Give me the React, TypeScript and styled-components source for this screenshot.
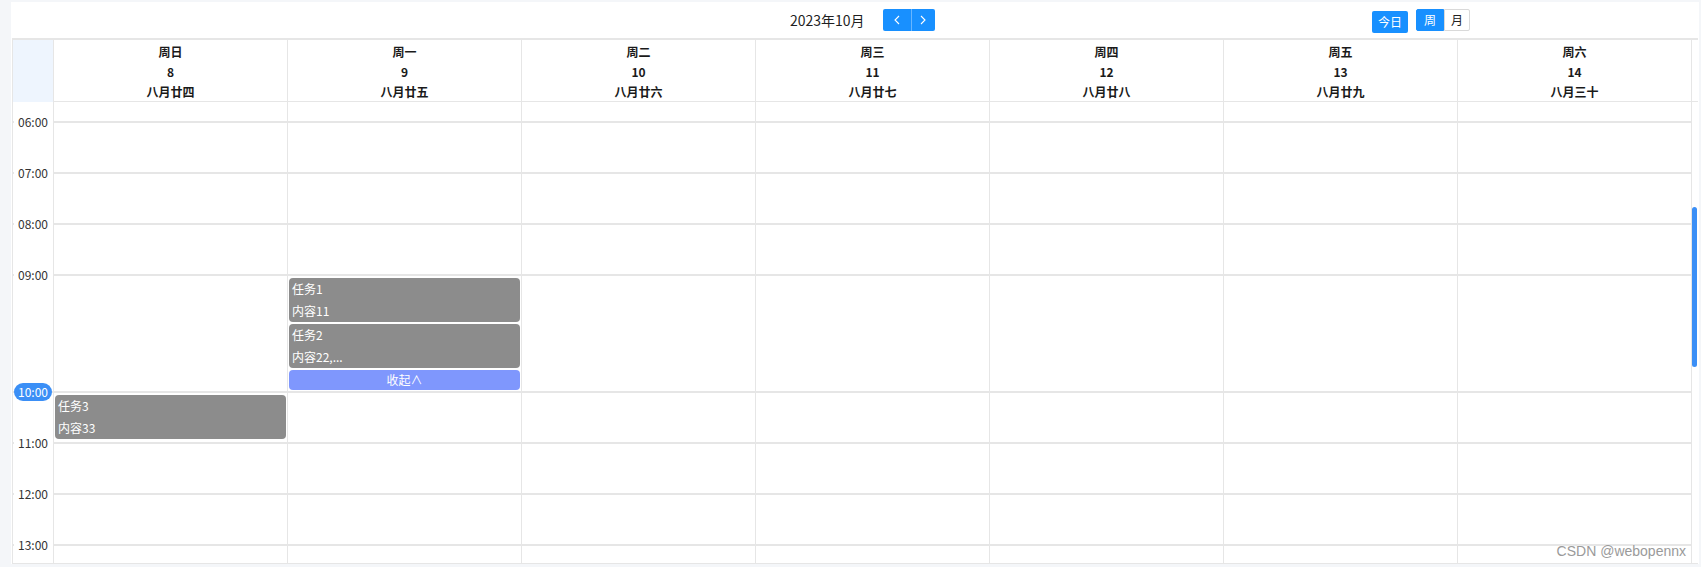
import React from 'react'
import styled, { createGlobalStyle } from 'styled-components'

const GlobalStyle = createGlobalStyle`
  html, body {
    margin: 0;
    padding: 0;
    background: #f4f6f9;
    font-family: "Microsoft YaHei", "Noto Sans CJK SC", "Noto Sans", sans-serif;
  }
  * { box-sizing: border-box; }
`

const BLUE = '#1890ff'
const LINE = '#e6e6e6'

const Page = styled.div`
  position: relative;
  height: 567px;
  padding: 2px 2px 0 11px;
`

const Panel = styled.div`
  width: 1688px;
  height: 562px;
  background: #fff;
  display: flex;
  flex-direction: column;
`

const Toolbar = styled.div`
  height: 36px;
  display: flex;
  align-items: center;
  padding: 0 229px 0 779px;
`

const Title = styled.div`
  font-size: 14px;
  color: #1f1f1f;
  line-height: 20px;
`

const NavGroup = styled.div`
  margin-left: 18px;
  display: flex;
  height: 22px;
  border-radius: 2px;
  overflow: hidden;
`

const NavBtn = styled.button<{ $w: number; $split?: boolean }>`
  width: ${(p) => p.$w}px;
  height: 22px;
  padding: 0;
  border: none;
  border-left: ${(p) => (p.$split ? '1px solid rgba(255,255,255,0.35)' : 'none')};
  background: ${BLUE};
  display: flex;
  align-items: center;
  justify-content: center;
`

const RightGroup = styled.div`
  margin-left: auto;
  display: flex;
  align-items: center;
`

const TodayBtn = styled.button`
  width: 36px;
  height: 22px;
  margin-top: 4px;
  padding: 0;
  border: none;
  border-radius: 2px;
  background: ${BLUE};
  color: #fff;
  font-family: inherit;
  font-size: 12px;
  line-height: 22px;
`

const Segmented = styled.div`
  margin-left: 8px;
  display: flex;
  height: 22px;
`

const SegBtn = styled.button<{ $active?: boolean; $w: number }>`
  width: ${(p) => p.$w}px;
  height: 22px;
  padding: 0;
  font-family: inherit;
  font-size: 12px;
  line-height: 20px;
  color: ${(p) => (p.$active ? '#fff' : '#222')};
  background: ${(p) => (p.$active ? BLUE : '#fff')};
  border: 1px solid ${(p) => (p.$active ? BLUE : '#d9d9d9')};
  border-radius: ${(p) => (p.$active ? '2px 0 0 2px' : '0 2px 2px 0')};
`

const Grid = styled.div`
  margin-left: 1px;
  width: 1686px;
  height: 526px;
  border-top: 2px solid ${LINE};
  border-left: 1px solid ${LINE};
  border-bottom: 1px solid ${LINE};
  display: flex;
  flex-direction: column;
`

const HeaderRow = styled.div`
  display: grid;
  grid-template-columns: 40px repeat(7, 234px) 7px;
  height: 62px;
  border-bottom: 1px solid ${LINE};
`

const CornerCell = styled.div`
  background: #eef5fe;
`

const DayHead = styled.div`
  border-left: 1px solid ${LINE};
  padding-top: 2px;
  text-align: center;
  font-size: 12px;
  font-weight: bold;
  line-height: 20px;
  color: #1a1a1a;
`

const Gutter = styled.div`
  border-left: 1px solid ${LINE};
`

const Body = styled.div`
  flex: 1;
  display: flex;
  overflow: hidden;
`

const Rows = styled.div`
  width: 1678px;
  display: flex;
  flex-direction: column;
`

const HourRow = styled.div<{ $h: number; $noLine?: boolean }>`
  height: ${(p) => p.$h}px;
  flex: none;
  display: grid;
  grid-template-columns: 40px repeat(7, 234px);
  border-top: ${(p) => (p.$noLine ? 'none' : `2px solid ${LINE}`)};
`

const TimeCell = styled.div`
  display: flex;
  justify-content: flex-end;
  align-items: flex-start;
`

const TimeLabel = styled.span`
  margin-top: -9px;
  padding: 0 5px 0 4px;
  background: #fff;
  font-size: 12px;
  line-height: 16px;
  color: #333;
`

const NowBadge = styled.span`
  margin-top: -10px;
  margin-right: 1px;
  width: 38px;
  height: 18px;
  border-radius: 9px;
  background: #3b8ff6;
  color: #fff;
  font-size: 12px;
  line-height: 18px;
  text-align: center;
`

const DayCell = styled.div`
  border-left: 1px solid ${LINE};
  padding: 2px 1px 0 1px;
  display: flex;
  flex-direction: column;
  gap: 2px;
  min-width: 0;
`

const EventCard = styled.div`
  height: 44px;
  flex: none;
  background: #8c8c8c;
  border-radius: 4px;
  padding: 0 3px;
  color: #fff;
  font-size: 12px;
  line-height: 22px;
  white-space: nowrap;
  overflow: hidden;
`

const CollapseBtn = styled.div`
  height: 20px;
  flex: none;
  background: #7f97fd;
  border-radius: 4px;
  color: #fff;
  font-size: 12px;
  line-height: 20px;
  text-align: center;
`

const ScrollTrack = styled.div`
  width: 7px;
  border-left: 1px solid ${LINE};
`

const Thumb = styled.div`
  margin-top: 105px;
  width: 5px;
  height: 160px;
  border-radius: 3px;
  background: #3b8ff6;
`

const Watermark = styled.div`
  position: absolute;
  right: 15px;
  bottom: 8px;
  font-family: "Liberation Sans", Arial, sans-serif;
  font-size: 14px;
  color: #9a9a9a;
  text-shadow: 0 0 2px #fff;
`

const Chevron = ({ dir }: { dir: 'left' | 'right' }) => (
  <svg width="6" height="10" viewBox="0 0 6 10">
    <polyline
      points={dir === 'left' ? '5,1 1,5 5,9' : '1,1 5,5 1,9'}
      fill="none"
      stroke="#fff"
      strokeWidth="1.1"
    />
  </svg>
)

const days = [
  { w: '周日', d: 8, l: '八月廿四' },
  { w: '周一', d: 9, l: '八月廿五' },
  { w: '周二', d: 10, l: '八月廿六' },
  { w: '周三', d: 11, l: '八月廿七' },
  { w: '周四', d: 12, l: '八月廿八' },
  { w: '周五', d: 13, l: '八月廿九' },
  { w: '周六', d: 14, l: '八月三十' },
]

type Ev = { title: string; body: string }

const hours: { label: string; h: number; now?: boolean; events?: Record<number, Ev[]>; collapse?: number }[] = [
  { label: '06:00', h: 51 },
  { label: '07:00', h: 51 },
  { label: '08:00', h: 51 },
  {
    label: '09:00',
    h: 117,
    events: {
      1: [
        { title: '任务1', body: '内容11' },
        { title: '任务2', body: '内容22,...' },
      ],
    },
    collapse: 1,
  },
  { label: '10:00', h: 51, now: true, events: { 0: [{ title: '任务3', body: '内容33' }] } },
  { label: '11:00', h: 51 },
  { label: '12:00', h: 51 },
  { label: '13:00', h: 19 },
]

export default function App() {
  return (
    <Page>
      <GlobalStyle />
      <Panel>
        <Toolbar>
          <Title>2023年10月</Title>
          <NavGroup>
            <NavBtn $w={28}>
              <Chevron dir="left" />
            </NavBtn>
            <NavBtn $w={24} $split>
              <Chevron dir="right" />
            </NavBtn>
          </NavGroup>
          <RightGroup>
            <TodayBtn>今日</TodayBtn>
            <Segmented>
              <SegBtn $active $w={28}>周</SegBtn>
              <SegBtn $w={26}>月</SegBtn>
            </Segmented>
          </RightGroup>
        </Toolbar>

        <Grid>
          <HeaderRow>
            <CornerCell />
            {days.map((d) => (
              <DayHead key={d.w}>
                <div>{d.w}</div>
                <div>{d.d}</div>
                <div>{d.l}</div>
              </DayHead>
            ))}
            <Gutter />
          </HeaderRow>

          <Body>
            <Rows>
              {/* tail of the 05:00 hour, scrolled out of view */}
              <HourRow $h={19} $noLine>
                <TimeCell />
                {days.map((d) => (
                  <DayCell key={d.w} />
                ))}
              </HourRow>
              {hours.map((hr) => (
                <HourRow key={hr.label} $h={hr.h}>
                  <TimeCell>
                    {hr.now ? <NowBadge>{hr.label}</NowBadge> : <TimeLabel>{hr.label}</TimeLabel>}
                  </TimeCell>
                  {days.map((d, i) => (
                    <DayCell key={d.w}>
                      {hr.events?.[i]?.map((ev) => (
                        <EventCard key={ev.title}>
                          <div>{ev.title}</div>
                          <div>{ev.body}</div>
                        </EventCard>
                      ))}
                      {hr.collapse === i && <CollapseBtn>收起∧</CollapseBtn>}
                    </DayCell>
                  ))}
                </HourRow>
              ))}
            </Rows>
            <ScrollTrack>
              <Thumb />
            </ScrollTrack>
          </Body>
        </Grid>
      </Panel>
      <Watermark>CSDN @webopennx</Watermark>
    </Page>
  )
}
